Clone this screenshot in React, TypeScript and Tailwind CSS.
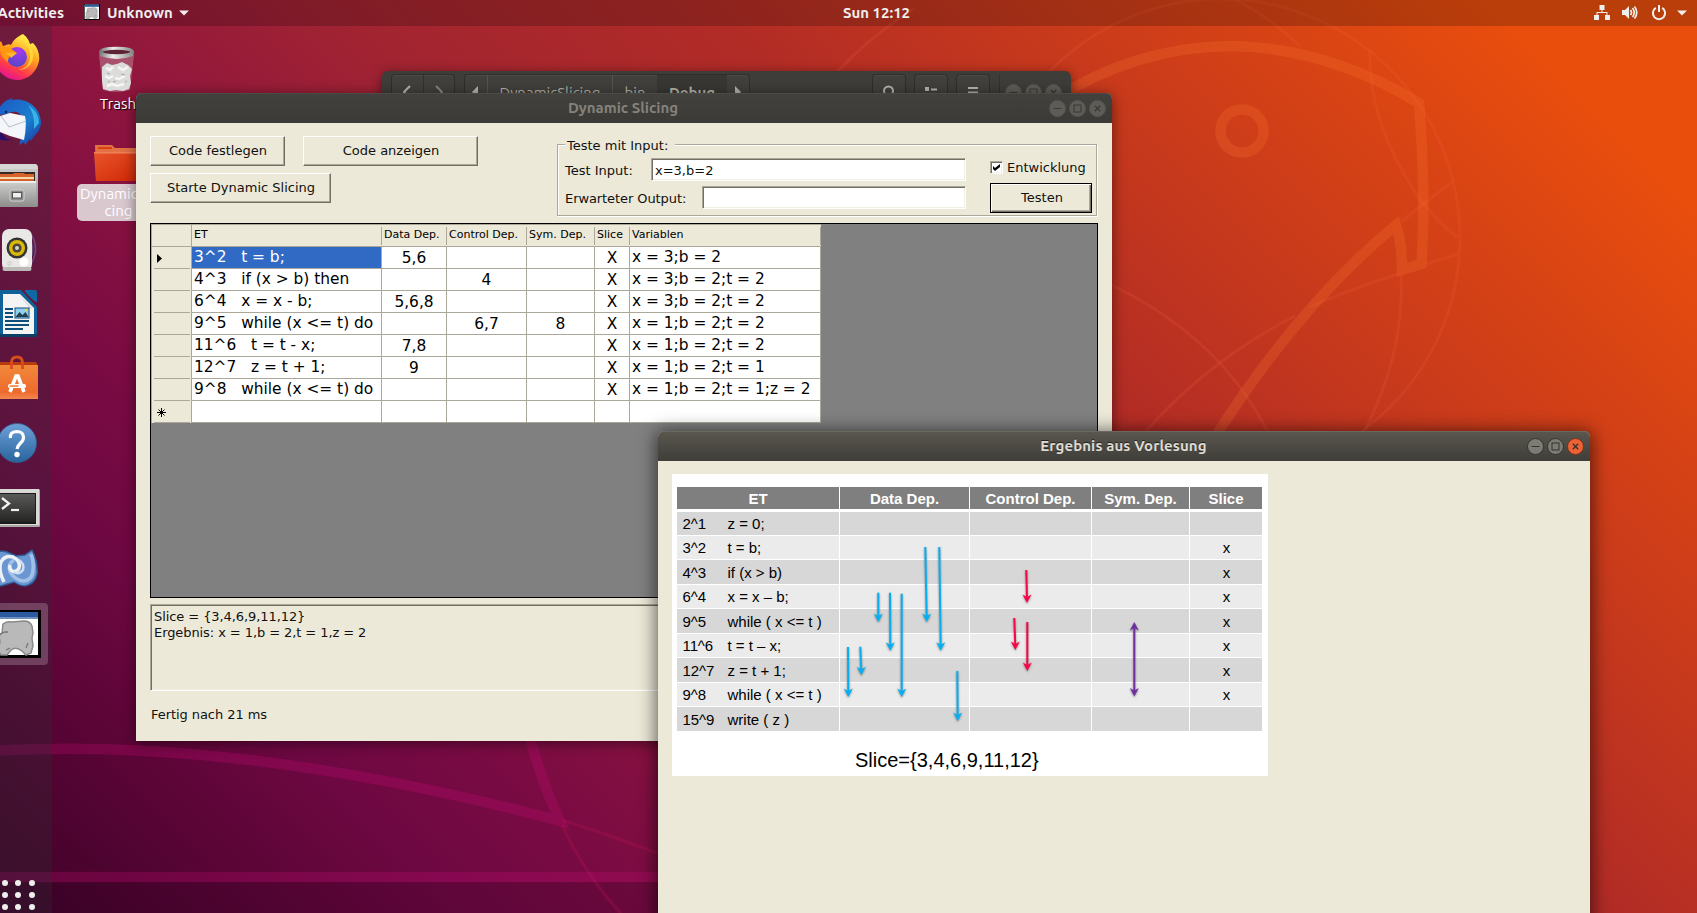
import React from "react";

const uiFont = "font-['DejaVu_Sans',sans-serif]";
const shellFont = "font-['Ubuntu','Noto_Sans',sans-serif]";

function Wallpaper() {
  return (
    <svg className="absolute inset-0" width="1697" height="913" viewBox="0 0 1697 913" fill="none">
      <rect x="0" y="882" width="700" height="31" fill="#20001a" opacity="0.18" />
      <g stroke="#c80a78" strokeOpacity="0.27" strokeWidth="10.5">
        <path d="M-10 751 C160 741 350 765 560 821 Q540 778 528 730" strokeLinejoin="miter" />
        <path d="M0 877H700" />
      </g>
      <g stroke="#d01a58" strokeOpacity="0.2" strokeWidth="3">
        <path d="M562 820 Q610 835 665 856" />
        <path d="M562 825 Q585 875 625 918" />
      </g>
      <g stroke="#ff7a30" strokeOpacity="0.22" strokeWidth="10.5">
        <path d="M1050 102 Q1135 46 1235 46 Q1330 49 1419 103 Q1426 190 1421.500 264 L1402 270 Q1402 243 1396 225 Q1296 308 1212 442" />
        <circle cx="1242" cy="131" r="21.500" />
      </g>
      <g stroke="#ff6a4a" strokeOpacity="0.14" strokeWidth="3">
        <circle cx="1221" cy="238" r="239" />
        <path d="M1236 0 Q1270 17 1301 47" />
        <path d="M1370 50 Q1367 120 1418 197 Q1436 220 1458 238" />
        <path d="M1402 221 Q1430 198 1454 181" />
        <path d="M1398 274 Q1340 293 1310 307" />
        <path d="M1295 316 Q1205 362 1142 436" />
        <path d="M1426 264 L1458 254" />
        <path d="M1401 275 Q1405 355 1362 436" />
        <path d="M1105 282 Q1220 335 1270 436" />
        <path d="M835 74 Q870 36 915 8" />
      </g>
    </svg>
  );
}

function AppGlyph() {
  return (
    <g>
      <rect width="48" height="48" fill="#000" />
      <rect x="2" y="2" width="43" height="43" fill="#fff" />
      <rect x="2" y="2" width="43" height="7" fill="#2c5aa0" />
      <rect x="2" y="7" width="43" height="2" fill="#6e8fc0" />
      <path
        d="M10 14q4-3 9-2l12-1q6 0 8 5l1 7-1 5 1 8-2 7-5 2-4-4q-6-5-11-1l-4 5H8l-3-5 2-8-1-6 3-3z"
        fill="#b9b9b9"
        stroke="#8a8a8a"
        strokeWidth="1.500"
      />
      <path d="M7 24l5-2 3 0M35 33l-2 5M17 38l-4 2" stroke="#777" strokeWidth="1.300" fill="none" />
    </g>
  );
}

function TopBar() {
  return (
    <header
      className={`relative z-30 flex h-[26px] items-center bg-black/20 text-[15px] font-bold leading-none text-[#eeeeec] ${shellFont}`}
    >
      <div className="flex flex-1 items-center">
        <div className="flex w-[64px] justify-end pb-[2px]">
          <span>Activities</span>
        </div>
        <svg className="ml-5 mt-[-2px]" width="16" height="16" viewBox="0 0 48 48">
          <AppGlyph />
        </svg>
        <span className="ml-[7px] w-[67px] pb-[2px]">Unknown</span>
        <svg className="ml-[5px] mt-[-1px]" width="10" height="6" viewBox="0 0 10 6">
          <path d="M0 0.500h10L5 5.500z" fill="#eeeeec" />
        </svg>
      </div>
      <span className="ml-[66px] pb-[2px]">Sun 12:12</span>
      <div className="flex flex-1 items-center justify-end pr-[10px]">
        <svg width="16" height="16" viewBox="0 0 16 16" fill="#eeeeec">
          <path d="M5.500 0h5v5h-2v2h5v3h2.500v5h-5v-5h1.500V8h-9v2H5v5H0v-5h2.500V7h5V5h-2z" />
        </svg>
        <svg className="ml-[12px]" width="16" height="16" viewBox="0 0 16 16" fill="none" stroke="#eeeeec">
          <path d="M0 5h3l4-4v13l-4-4H0z" fill="#eeeeec" stroke="none" />
          <path d="M8.500 5q2 2.500 0 5M10.500 3q3.500 4.500 0 9M12.500 1.500q4.500 6 0 12" strokeWidth="1.700" />
        </svg>
        <svg className="ml-[13px]" width="16" height="16" viewBox="0 0 16 16" fill="none" stroke="#eeeeec" strokeWidth="2">
          <path d="M4.800 2.900a6.100 6.100 0 1 0 6.400 0M8 0v7" />
        </svg>
        <svg className="ml-[10px]" width="10" height="6" viewBox="0 0 10 6">
          <path d="M0 0.500h10L5 5.500z" fill="#eeeeec" />
        </svg>
      </div>
    </header>
  );
}

const dockIcons: React.ReactNode[] = [
  <g key="browser">
    <defs>
      <linearGradient id="ffBody" x1="0.8" y1="0" x2="0.3" y2="1">
        <stop offset="0.1" stopColor="#fff04a" />
        <stop offset="0.45" stopColor="#ff9a1c" />
        <stop offset="0.75" stopColor="#ff3a4a" />
        <stop offset="1" stopColor="#e3109b" />
      </linearGradient>
      <radialGradient id="ffCore" cx="0.6" cy="0.2" r="0.9">
        <stop offset="0" stopColor="#a838f0" />
        <stop offset="1" stopColor="#4a48c4" />
      </radialGradient>
    </defs>
    <path
      d="M23 34c5 4 6 7 7 10l3-1c5 5 7 12 6 18-2 11-11 19-22 19C5 80-5 70-5 58c0-7 2-12 6-17l2 5 3-1c2-1 4-1 5 0 3-6 6-8 12-11z"
      fill="url(#ffBody)"
    />
    <circle cx="17" cy="57" r="10" fill="url(#ffCore)" />
    <path d="M0 43l3 5 7 0 7 5-5 3c-3 0-4 3-4 6-5-3-9-9-8-19z" fill="#ff980e" />
    <path d="M17 53q-6-1-11 0 5 4 5 5z" fill="#ffb931" />
    <path d="M23 34c-2 10 9 10 7 24-1 8-6 11-12 12 10 0 16-7 15-16-1-8-8-10-10-20z" fill="#ffe13c" opacity=".75" />
  </g>,
  <g key="mail">
    <defs>
      <linearGradient id="tbBody" x1="0" y1="0" x2="1" y2="1">
        <stop offset="0" stopColor="#1b57c4" />
        <stop offset="0.6" stopColor="#1b7fce" />
        <stop offset="1" stopColor="#1d2f9c" />
      </linearGradient>
    </defs>
    <path
      d="M13 98l-2 2c16-3 29 7 30 22 0 6-3 11-7 14l-3 5-1-2-5 6-1-3-5 3c3-10 7-16 4-26-3-9-12-8-15-5l-12 1q4-14 17-17z"
      fill="url(#tbBody)"
    />
    <path d="M28 105q11 7 11 18l-5 6q1-15-6-24z" fill="#37b3e6" />
    <path d="M-7 118l17-5 15 3q2 9-1 24l-14-4-10-4-7-5z" fill="#f4f6f9" />
    <path d="M1 116l8 11 17-6" fill="none" stroke="#b4bfcb" strokeWidth="1" />
    <path d="M-7 132q8-2 13 6 3 2 7 2-14 2-20-5z" fill="#2a0f6a" />
    <circle cx="6" cy="112" r="1.500" fill="#0e2b66" />
  </g>,
  <g key="files">
    <defs>
      <linearGradient id="cab" x1="0" y1="0" x2="0" y2="1">
        <stop offset="0" stopColor="#d0d0cf" />
        <stop offset="1" stopColor="#8f8f8d" />
      </linearGradient>
    </defs>
    <path d="M-7 164H35q3 0 3 4v38q0 1-2 1H-7z" fill="url(#cab)" />
    <path d="M-7 164H35q2 1 3 5H-7z" fill="#d6d6d5" />
    <path d="M-7 172H35v11H-7z" fill="#332824" />
    <path d="M-7 174H13l1-1h10l1 1h9v8H-7z" fill="#d4642c" />
    <path d="M-7 177H34v2H-7z" fill="#f9d9ab" />
    <path d="M-7 181H36v25H-7z" fill="url(#cab)" />
    <path d="M-7 181H36v2H-7z" fill="#ededec" />
    <rect x="10" y="190" width="14" height="11" rx="2" fill="#8b8b8b" stroke="#d4d4d4" />
    <rect x="12.500" y="192.500" width="9" height="5.500" fill="#eee" stroke="#555" />
  </g>,
  <g key="music">
    <path d="M31 234q9 15 0 30M29 237q7 13 0 24" stroke="#6d78b0" strokeOpacity=".55" strokeWidth="1.600" fill="none" />
    <rect x="2" y="229" width="30" height="42" rx="7" fill="#e9e8e6" />
    <rect x="2.500" y="267" width="29" height="4" rx="2" fill="#bcbab7" />
    <circle cx="17" cy="248" r="10.500" fill="#35352f" />
    <circle cx="17" cy="248" r="8" fill="#d9b90c" />
    <circle cx="17" cy="248" r="4.600" fill="#4a4738" />
    <circle cx="17" cy="248" r="2" fill="#d8d6cc" />
    <circle cx="24" cy="262" r="4.500" fill="#fff" />
    <path d="M8 262h3v3H8z" fill="none" stroke="#ccc" />
  </g>,
  <g key="writer">
    <path d="M-7 290H21l16 17v28q0 2-2 2H-7z" fill="#0f6197" />
    <path d="M-7 334H37v1q0 2-2 2H-7z" fill="#0a3f66" />
    <path d="M25 290H35q2 0 2 2v10q-2 0-4-2l-7-7q-2-2-1-3z" fill="#0f69a3" />
    <path d="M2 295H19l14 14v26H2z" fill="#f4f4f4" transform="translate(1 -1)" />
    <path d="M19 295l14 14-3-1z" fill="#ccc" />
    <path d="M5 309h8M5 313h8M5 317h8M5 321h24M5 325h24M5 329h18" stroke="#0d4e7b" strokeWidth="1.800" />
    <rect x="15" y="308" width="14" height="10" fill="#8fd0f2" stroke="#0d4e7b" />
    <path d="M15.500 317l4-5 3 3 3-3 3 5z" fill="#24404d" />
    <circle cx="26" cy="310" r="1.300" fill="#f3cf35" />
  </g>,
  <g key="store">
    <defs>
      <linearGradient id="bag" x1="0" y1="0" x2="0" y2="1">
        <stop offset="0" stopColor="#f0893a" />
        <stop offset="0.8" stopColor="#ee6a2d" />
        <stop offset="1" stopColor="#f08850" />
      </linearGradient>
    </defs>
    <path d="M-7 362H36l2 4H-7z" fill="#b83a0d" />
    <path d="M-7 365H38v34H-7z" fill="url(#bag)" />
    <path d="M11.500 369v-6q0-6 5.500-6t5.500 6v6" fill="none" stroke="#d64c1b" strokeWidth="2.800" />
    <path d="M10 392l6-16h2l6 16" fill="none" stroke="#fff" strokeWidth="3.600" />
    <rect x="8" y="384" width="18" height="4" rx="1.800" fill="#fff" />
    <rect x="9.500" y="385.300" width="9" height="1.500" fill="#ee7a32" />
  </g>,
  <g key="help">
    <defs>
      <linearGradient id="helpFill" x1="0" y1="0" x2="0" y2="1">
        <stop offset="0" stopColor="#6ea0d8" />
        <stop offset="1" stopColor="#29649c" />
      </linearGradient>
    </defs>
    <circle cx="17" cy="443" r="19.500" fill="url(#helpFill)" stroke="#2f5f92" strokeWidth=".8" />
    <path d="M10.500 438q-1-6 6-6.500 7 0 7 6 0 3-3 5.500-3 3-3.500 6" fill="none" stroke="#fff" strokeWidth="3.200" />
    <circle cx="17" cy="454.500" r="2.700" fill="#fff" />
  </g>,
  <g key="terminal">
    <defs>
      <linearGradient id="termFill" x1="0" y1="0" x2="0" y2="1">
        <stop offset="0" stopColor="#5a5a58" />
        <stop offset="1" stopColor="#242423" />
      </linearGradient>
    </defs>
    <rect x="-8" y="489" width="48" height="38" rx="1.500" fill="#aaa9a7" />
    <rect x="-8" y="489" width="47" height="36" fill="#dad9d6" />
    <rect x="-8" y="493" width="44" height="31" fill="#1a1a1a" />
    <rect x="-8" y="494" width="43" height="28" fill="url(#termFill)" />
    <path d="M2 498l7 5.500-7 5.500" fill="none" stroke="#f2f2f2" strokeWidth="2.300" />
    <path d="M11 510h8" stroke="#f2f2f2" strokeWidth="2.200" />
  </g>,
  <g key="ide">
    <path
      d="M-7 553q8-3 14-1l9 4 9-1 7-5q6 12 5 24-2 10-12 12-5 0-11-4l-10 3-11 3z"
      fill="#6a97d2"
      stroke="#2f5e9a"
      strokeWidth="1.500"
    />
    <path d="M31 554q3 8 2 17-1 9-9 10-8 0-14-9-3-8 4-12" fill="none" stroke="#a3c0e8" strokeWidth="3.500" />
    <path d="M4 582q-6-12-3-20 4-7 12-5 8 4 6 11-2 5-7 3-3-2-2-6" fill="none" stroke="#eef1f4" strokeWidth="3.500" />
    <path d="M19 560q6 4 4 10-4 5-9 2" fill="none" stroke="#cfe0f4" strokeWidth="2.500" />
  </g>,
];

function Dock() {
  return (
    <aside className="relative z-20 flex w-[51.5px] flex-col justify-between overflow-hidden bg-[rgba(48,48,52,0.3)]">
      <div className="flex flex-col">
        {dockIcons.map((icon, i) => (
          <div key={i} className="flex h-16 items-center">
            <svg className="-ml-[7px] shrink-0" width="48" height="48" viewBox={`-7 ${34 + 64 * i} 48 48`}>
              {icon}
            </svg>
          </div>
        ))}
        <div className="mt-px flex h-[62px] w-12 items-center rounded-r-[4px] bg-white/20">
          <svg className="-ml-[7px] shrink-0" width="48" height="48" viewBox="0 0 48 48">
            <AppGlyph />
          </svg>
        </div>
      </div>
      <div className="grid w-9 grid-cols-3 gap-x-[6px] gap-y-[6px] pb-[3px] pl-[2px]">
        {Array.from({ length: 9 }, (_, i) => (
          <span key={i} className="h-[6px] w-[6px] rounded-full bg-[#eeeeec]" />
        ))}
      </div>
    </aside>
  );
}

function DesktopIcons() {
  return (
    <div className={`absolute left-[77px] top-[44px] z-0 flex w-20 flex-col items-center text-white ${shellFont}`}>
      <svg width="48" height="49" viewBox="93 44 48 49">
        <defs>
          <linearGradient id="rim" x1="0" y1="0" x2="1" y2="0">
            <stop offset="0" stopColor="#777" />
            <stop offset="0.4" stopColor="#eee" />
            <stop offset="1" stopColor="#888" />
          </linearGradient>
        </defs>
        <path d="M99 55l4 35q13 4 27 0l4-35z" fill="#d8c0c8" opacity=".35" />
        <path d="M102 67l5-4 5 2 5-1 5-2 6 3 4 4-2 7 1 7-2 6-6 2-7-1-6 1-7-2-1-8z" fill="#dcdcda" />
        <path
          d="M106 68l4 2 3-3M118 67l5 3 5-3M105 76l4 2 4-2M115 78l4 1 6-3M107 86l5-2 5 2 7-2"
          stroke="#f6f6f6"
          strokeWidth="2.500"
          fill="none"
        />
        <path d="M107 73l3 1M121 74l4 1M113 82l3-1M125 82l2-1M108 81l2 1" stroke="#a5a5a5" fill="none" />
        <ellipse cx="116.500" cy="52" rx="16" ry="3.800" fill="#5c2434" stroke="url(#rim)" strokeWidth="3" />
        <path d="M99 53l1 3q17 6 33 0l1-3q-17 6-35 0z" fill="url(#rim)" />
      </svg>
      <span className="ml-[2px] text-[15px] leading-[21px] [text-shadow:1px_1px_1px_#000]">Trash</span>
      <svg className="mt-[30px]" width="48" height="38" viewBox="0 0 48 38">
        <defs>
          <linearGradient id="folder" x1="0" y1="0" x2="1" y2="1">
            <stop offset="0" stopColor="#e8562c" />
            <stop offset="1" stopColor="#cf2503" />
          </linearGradient>
        </defs>
        <path d="M2 1h17l3 3h24v33H3z" fill="#e27144" />
        <path d="M5 3h14v2H5z" fill="#d9420f" />
        <path d="M1 8h46l-1 29H3z" fill="url(#folder)" />
        <path d="M1 8h46v1.500H1z" fill="#ef8158" />
      </svg>
      <span className="mt-[2px] h-[37px] w-20 whitespace-nowrap rounded-[5px] bg-[#dac8cf] pl-[3px] pt-[1px] text-center text-[15px] leading-[17px]">
        DynamicSli-
        <br />
        cing
      </span>
    </div>
  );
}

type ControlsProps = { active?: boolean };

function WindowControls({ active = false }: ControlsProps) {
  const ring = active ? "border-[#33322d] bg-[#7c7b74]" : "border-[#55534d] bg-[#5e5c56]";
  const stroke = active ? "#34332e" : "#3a3935";
  return (
    <div className="flex gap-[3px]">
      <span className={`h-[17px] w-[17px] rounded-full border ${ring}`}>
        <svg width="15" height="15" viewBox="0 0 15 15">
          <path d="M3.500 7.500h8" stroke={stroke} />
        </svg>
      </span>
      <span className={`h-[17px] w-[17px] rounded-full border ${ring}`}>
        <svg width="15" height="15" viewBox="0 0 15 15">
          <rect x="4" y="4" width="7" height="7" fill="none" stroke={stroke} />
        </svg>
      </span>
      <span className={`h-[17px] w-[17px] rounded-full border ${active ? "border-[#7a3018] bg-[#ee6238]" : ring}`}>
        <svg width="15" height="15" viewBox="0 0 15 15">
          <path d="M4.800 4.800l5.400 5.400M10.200 4.800l-5.400 5.400" stroke={stroke} strokeWidth="1.300" />
        </svg>
      </span>
    </div>
  );
}

function FilesWindow() {
  const box = "border border-b-0 border-[#2f2e2b] bg-[#41403c] shadow-[inset_0_1px_0_#4d4b46]";
  return (
    <div
      className={`absolute left-[382px] top-[71px] z-[1] flex h-[40px] w-[689px] items-start overflow-hidden rounded-t-[6px] bg-[#3e3d39] pt-[3px] text-[15px] text-[#b5b3aa] shadow-[0_2px_12px_rgba(0,0,0,0.45)] ${shellFont}`}
    >
      <div className={`ml-[9px] flex h-9 w-16 rounded-t-[4px] ${box}`}>
        <div className="flex flex-1 justify-center border-r border-[#33322f] pt-[10px]">
          <svg width="8" height="14" viewBox="0 0 8 14" fill="none" stroke="#b5b3aa" strokeWidth="2">
            <path d="M7 1L1 7l6 6" />
          </svg>
        </div>
        <div className="flex flex-1 justify-center pt-[10px]">
          <svg width="8" height="14" viewBox="0 0 8 14" fill="none" stroke="#85837b" strokeWidth="2">
            <path d="M1 1l6 6-6 6" />
          </svg>
        </div>
      </div>
      <div className={`ml-[9px] flex h-9 w-[286px] rounded-t-[4px] ${box}`}>
        <div className="flex w-[23px] justify-center border-r border-[#56544e] pr-[2px] pt-[11px]">
          <svg width="6" height="12" viewBox="0 0 6 12">
            <path d="M6 0v12L0 6z" fill="#b5b3aa" />
          </svg>
        </div>
        <div className="w-[125px] border-r border-[#56544e] pt-[8px] text-center leading-5">DynamicSlicing</div>
        <div className="w-[44px] pt-[8px] text-center leading-5">bin</div>
        <div className="w-[70px] bg-[#383733] pt-[8px] text-center font-bold leading-5">Debug</div>
        <div className="flex flex-1 justify-center pt-[11px]">
          <svg width="6" height="12" viewBox="0 0 6 12">
            <path d="M0 0v12l6-6z" fill="#b5b3aa" />
          </svg>
        </div>
      </div>
      <div className={`ml-[122px] flex h-9 w-[34px] justify-center rounded-t-[4px] pt-[10px] ${box}`}>
        <svg width="12" height="14" viewBox="0 0 12 14" fill="none" stroke="#b5b3aa" strokeWidth="2">
          <circle cx="5.500" cy="6" r="4.500" />
        </svg>
      </div>
      <div className={`ml-[8px] flex h-9 w-[34px] justify-center rounded-t-[4px] pt-[12px] ${box}`}>
        <svg width="12" height="8" viewBox="0 0 12 8" fill="#b5b3aa">
          <path d="M0 0h4v4H0zM6 1.500h6v2H6z" />
        </svg>
      </div>
      <div className={`ml-[8px] flex h-9 w-[34px] justify-center rounded-t-[4px] pt-[12px] ${box}`}>
        <svg width="10" height="10" viewBox="0 0 10 10" fill="#b5b3aa">
          <path d="M0 0h10v2H0zM0 4.500h10v2H0z" />
        </svg>
      </div>
      <div className="ml-[9px] h-9 w-px bg-[#33322f]" />
      <div className="ml-[5px] pt-[10px]">
        <WindowControls />
      </div>
    </div>
  );
}

const sunken =
  "border border-t-[#aca899] border-l-[#aca899] border-b-white border-r-white shadow-[inset_1px_1px_0_#716f64,inset_-1px_-1px_0_#f1efe2]";
const raised =
  "border border-t-white border-l-white border-b-[#716f64] border-r-[#716f64] pl-px shadow-[inset_-1px_-1px_0_#aca899]";

type Row = { code: string; data?: string; control?: string; sym?: string; vars: string };

const rows: Row[] = [
  { code: "3^2   t = b;", data: "5,6", vars: "x = 3;b = 2" },
  { code: "4^3   if (x > b) then", control: "4", vars: "x = 3;b = 2;t = 2" },
  { code: "6^4   x = x - b;", data: "5,6,8", vars: "x = 3;b = 2;t = 2" },
  { code: "9^5   while (x <= t) do", control: "6,7", sym: "8", vars: "x = 1;b = 2;t = 2" },
  { code: "11^6   t = t - x;", data: "7,8", vars: "x = 1;b = 2;t = 2" },
  { code: "12^7   z = t + 1;", data: "9", vars: "x = 1;b = 2;t = 1" },
  { code: "9^8   while (x <= t) do", vars: "x = 1;b = 2;t = 1;z = 2" },
];

const headers = ["ET", "Data Dep.", "Control Dep.", "Sym. Dep.", "Slice", "Variablen"];

function RowHeader({ mark }: { mark?: React.ReactNode }) {
  return (
    <div className="flex border-r border-[#aca899] bg-[#ece9d8] pl-[2px] pr-px">
      <div className="flex flex-1 items-center border-b border-[#aca899] pl-[3px]">{mark}</div>
    </div>
  );
}

function DataGrid() {
  const cell = "overflow-hidden whitespace-pre border-b border-r border-[#aca899]";
  const mid = `${cell} pt-px text-center`;
  const left = `${cell} pl-[2px]`;
  return (
    <div className="h-[375px] w-[948px] border border-black bg-[#808080]">
      <div className="grid w-[670px] auto-rows-[22px] grid-cols-[40px_190px_65px_80px_68px_35px_191px] border-l border-t border-[#aca899] bg-white text-[15.4px] leading-[21px] text-black">
        <div className="border-b border-r border-[#aca899] bg-[#ece9d8]" />
        {headers.map((h) => (
          <div key={h} className="flex border-b border-[#aca899] bg-[#ece9d8] pb-px pt-[2px] text-[11px] leading-[15px]">
            <span className="flex-1 whitespace-nowrap border-r border-[#aca899] pl-[2px]">{h}</span>
          </div>
        ))}
        {rows.map((r, i) => (
          <React.Fragment key={i}>
            <RowHeader
              mark={
                i === 0 ? (
                  <svg className="mt-[2px]" width="5" height="9" viewBox="0 0 5 9">
                    <path d="M0 0l5 4.500L0 9z" />
                  </svg>
                ) : null
              }
            />
            <div className={i === 0 ? `${left} bg-[#316ac5] text-white` : left}>{r.code}</div>
            <div className={mid}>{r.data}</div>
            <div className={mid}>{r.control}</div>
            <div className={mid}>{r.sym}</div>
            <div className={mid}>X</div>
            <div className={left}>{r.vars}</div>
          </React.Fragment>
        ))}
        <RowHeader
          mark={
            <svg className="mt-[2px]" width="9" height="9" viewBox="0 0 9 9" stroke="#000">
              <path d="M4.500 0v9M0 4.500h9M1.500 1.500l6 6M7.500 1.500l-6 6" />
            </svg>
          }
        />
        {headers.map((h) => (
          <div key={h} className={cell} />
        ))}
      </div>
    </div>
  );
}

function SlicingWindow() {
  return (
    <div
      className={`absolute left-[136px] top-[93px] z-[2] flex h-[648px] w-[976px] flex-col rounded-t-[6px] bg-[#ece9d8] text-[13px] text-[#111] shadow-[0_2px_14px_rgba(0,0,0,0.5)] ${uiFont}`}
    >
      <div className="flex h-[30px] items-center rounded-t-[6px] bg-gradient-to-b from-[#42413d] to-[#3b3a36] pr-[6px] shadow-[inset_0_1px_0_#4b4a45]">
        <span className="w-[61px]" />
        <span className={`flex-1 text-center text-[15px] font-bold text-[#85827a] ${shellFont}`}>Dynamic Slicing</span>
        <WindowControls />
      </div>
      <div className="flex flex-col pl-[14px] pt-[13px]">
        <div className="flex h-[87px]">
          <div className="flex w-[407px] flex-col gap-[7px]">
            <div className="flex gap-[18px]">
              <button className={`h-[30px] w-[135px] ${raised}`}>Code festlegen</button>
              <button className={`h-[30px] w-[175px] ${raised}`}>Code anzeigen</button>
            </div>
            <button className={`h-[30px] w-[181px] ${raised}`}>Starte Dynamic Slicing</button>
          </div>
          <div className="relative mt-[8px] flex h-[72px] w-[540px] border border-[#aca899] pt-[13px] shadow-[inset_1px_1px_0_#fff,1px_1px_0_#fff]">
            <span className="absolute left-[7px] top-[-8px] w-[110px] bg-[#ece9d8] pl-[2px] leading-[17px]">Teste mit Input:</span>
            <div className="flex w-[409px] flex-col gap-[5px] pl-[7px]">
              <div className="flex h-[23px] items-center justify-between">
                <span className="pt-[2px]">Test Input:</span>
                <div className={`h-[23px] w-[315px] bg-white pl-[3px] leading-[23px] ${sunken}`}>x=3,b=2</div>
              </div>
              <div className="flex h-[23px] items-center justify-between">
                <span className="pt-[2px] tracking-[-0.08px]">Erwarteter Output:</span>
                <div className={`h-[23px] w-[264px] bg-white ${sunken}`} />
              </div>
            </div>
            <div className="ml-[24px] flex flex-col">
              <label className="relative flex h-[21px] w-[106px] items-center bg-[#ece9d8] pb-[3px]">
                <span className={`flex h-[13px] w-[13px] items-center justify-center bg-white ${sunken}`}>
                  <svg width="7" height="7" viewBox="0 0 7 7">
                    <path d="M0 2v3l2 2 5-4V0L2 4z" />
                  </svg>
                </span>
                <span className="ml-[4px] pt-px">Entwicklung</span>
              </label>
              <button className="mt-[4px] h-[30px] w-[102px] border border-black pl-[2px] shadow-[inset_1px_1px_0_#fff,inset_-1px_-1px_0_#716f64,inset_-2px_-2px_0_#aca899]">
                Testen
              </button>
            </div>
          </div>
        </div>
        <DataGrid />
        <div className={`mt-[6px] h-[87px] w-[948px] pl-[3px] pt-[4px] leading-4 tracking-[-0.08px] ${sunken}`}>
          Slice = {"{3,4,6,9,11,12}"}
          <br />
          Ergebnis: x = 1,b = 2,t = 1,z = 2
        </div>
        <span className="mt-[15px] pl-px leading-[17px] tracking-[-0.06px]">Fertig nach 21 ms</span>
      </div>
    </div>
  );
}

const lectureRows: [string, string, boolean][] = [
  ["2^1", "z = 0;", false],
  ["3^2", "t = b;", true],
  ["4^3", "if (x > b)", true],
  ["6^4", "x = x – b;", true],
  ["9^5", "while ( x <= t )", true],
  ["11^6", "t = t – x;", true],
  ["12^7", "z = t + 1;", true],
  ["9^8", "while ( x <= t )", true],
  ["15^9", "write ( z )", false],
];

type Arrow = [number, number, number, number];

const blueArrows: Arrow[] = [
  [925.3, 547, 926.7, 622],
  [939.3, 547, 940.7, 650.7],
  [878.3, 592.7, 878.3, 622],
  [890, 592.7, 890.3, 650.7],
  [901.7, 593.7, 901.7, 697],
  [848, 647, 848.3, 697],
  [860.3, 646.7, 861.3, 675.3],
  [957.3, 671, 957.7, 721],
];
const redArrows: Arrow[] = [
  [1026.3, 570, 1027, 603],
  [1014.3, 618, 1015.3, 650],
  [1027.3, 622, 1027.3, 671],
];

function ArrowLine({ a, color }: { a: Arrow; color: string }) {
  const [x1, y1, x2, y2] = a;
  return (
    <g>
      <path d={`M${x1} ${y1}L${x2} ${y2 - 4}`} stroke={color} strokeWidth="2" />
      <path d={`M${x2} ${y2}l-4.500 -8.500 4.500 2.500 4.500 -2.500z`} fill={color} />
    </g>
  );
}

function DependencyArrows() {
  return (
    <svg
      className="absolute inset-0 [filter:drop-shadow(0.5px_1px_0.8px_rgba(0,0,0,0.4))]"
      width="596"
      height="302"
      viewBox="672 474 596 302"
    >
      {blueArrows.map((a, i) => (
        <ArrowLine key={i} a={a} color="#08aef0" />
      ))}
      {redArrows.map((a, i) => (
        <ArrowLine key={i} a={a} color="#fa0548" />
      ))}
      <path d="M1134.300 626V692" stroke="#7030a0" strokeWidth="2" />
      <path
        d="M1134.300 622l-4.500 8.500 4.500-2.500 4.500 2.500zM1134.300 696.500l-4.500-8.500 4.500 2.500 4.500-2.500z"
        fill="#7030a0"
      />
    </svg>
  );
}

function LectureWindow() {
  const columns = "grid grid-cols-[162px_129px_121px_97px_72px] gap-x-px";
  return (
    <div
      className={`absolute left-[658px] top-[431px] z-[3] h-[500px] w-[932px] rounded-t-[6px] bg-[#ece9d8] shadow-[0_2px_18px_2px_rgba(0,0,0,0.6)] ${shellFont}`}
    >
      <div className="flex h-[30px] items-center rounded-t-[6px] bg-gradient-to-b from-[#5a574f] to-[#3f3e39] pr-[6px] shadow-[inset_0_1px_0_#6b685f]">
        <span className="w-[62px]" />
        <span className="flex-1 text-center text-[15px] font-bold tracking-[0.1px] text-[#dfdbd2] [text-shadow:0_-1px_0_#222]">
          Ergebnis aus Vorlesung
        </span>
        <WindowControls active />
      </div>
      <div className="relative ml-[14px] mt-[13px] h-[302px] w-[596px] bg-white pl-[5px] pt-[13px] font-['Liberation_Sans',sans-serif] text-black">
        <div className={`${columns} mb-[3px] w-[585px] text-center text-[15px] font-bold leading-[23px] text-white`}>
          {["ET", "Data Dep.", "Control Dep.", "Sym. Dep.", "Slice"].map((h) => (
            <div key={h} className="h-[22px] bg-[#7f7f7f]">
              {h}
            </div>
          ))}
        </div>
        <div className="grid w-[585px] grid-rows-[23px_23px_24px_23px_24px_23px_24px_23px_24px] gap-y-px text-[15px] leading-[23px]">
          {lectureRows.map(([id, code, marked], i) => {
            const bg = i % 2 === 0 ? "bg-[#d7d7d7]" : "bg-[#ebebeb]";
            const drop = i > 0 && i % 2 === 0 ? "pt-px" : "";
            return (
              <div key={id} className={columns}>
                <div className={`flex whitespace-pre pl-[5.5px] ${bg} ${drop}`}>
                  <span className="w-[45px] tracking-[-0.1px]">{id}</span>
                  <span>{code}</span>
                </div>
                <div className={bg} />
                <div className={bg} />
                <div className={bg} />
                <div className={`pl-px text-center ${bg} ${drop}`}>{marked ? "x" : ""}</div>
              </div>
            );
          })}
        </div>
        <div className="mt-[17px] pl-[178px] text-[20px] leading-6">{"Slice={3,4,6,9,11,12}"}</div>
        <DependencyArrows />
      </div>
    </div>
  );
}

export default function App() {
  return (
    <div className="relative flex h-[913px] w-[1697px] flex-col overflow-hidden bg-[linear-gradient(45deg,#40022a_0%,#45032b_3%,#5e0538_12%,#6e0842_18%,#780a43_24%,#8f153f_36%,#a22431_48%,#b22c26_62%,#ca3b1b_75%,#d44116_81%,#e94e0d_92%,#e94e0d_100%)]">
      <Wallpaper />
      <TopBar />
      <div className="flex flex-1">
        <Dock />
      </div>
      <DesktopIcons />
      <FilesWindow />
      <SlicingWindow />
      <LectureWindow />
    </div>
  );
}
